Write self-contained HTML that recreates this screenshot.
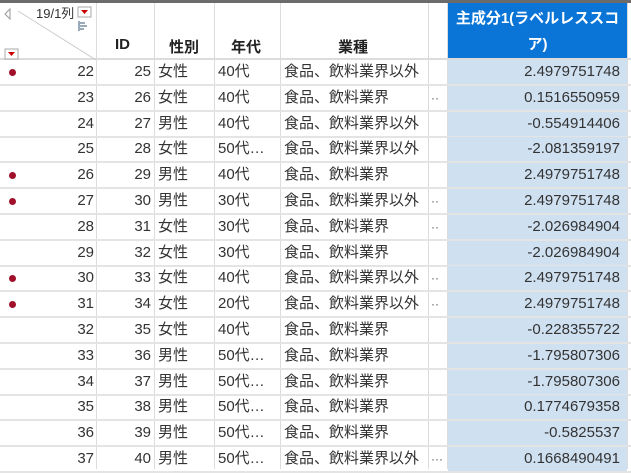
<!DOCTYPE html>
<html><head><meta charset="utf-8"><style>
*{margin:0;padding:0;box-sizing:border-box}
body{width:631px;height:469px;overflow:hidden;background:#fff;font-family:"Liberation Sans","Noto Sans CJK JP",sans-serif;font-size:15px;color:#333;position:relative}
.top{position:absolute;left:0;top:0;width:631px;height:3px;background:#6b6b6b}
.vl{position:absolute;top:3px;bottom:0;width:1px;background:#dcdcdc}
.hdr{position:absolute;top:3px;height:57px;font-weight:bold;color:#222;font-size:15px}
.r{position:absolute;left:0;width:631px;height:26px;border-bottom:2px solid #e4e4e4}
.c{position:absolute;top:0;height:24px;line-height:24px;white-space:nowrap;overflow:hidden}
.n{left:0;width:94px;text-align:right}
.id{left:97px;width:54px;text-align:right}
.g{left:158px}
.a{left:218px}
.b{left:284px}
.d{left:431px;color:#555;font-size:12px}
.v{left:448px;width:179px;background:#cfe0f1;text-align:right;padding-right:7px;height:24px}
.dot{position:absolute;left:9px;top:9px;width:7px;height:7px;border-radius:50%;background:#a0102a}
</style></head><body>
<div class="top"></div>
<div style="position:absolute;left:448px;top:3px;width:179px;height:57px;background:#0a75d6;color:#fff;font-weight:bold;font-size:15px;text-align:center;line-height:26px;padding-top:3px;white-space:nowrap">主成分1(ラベルレススコ<br>ア)</div>
<div class="vl" style="left:96px"></div>
<div class="vl" style="left:154px"></div>
<div class="vl" style="left:214px"></div>
<div class="vl" style="left:280px"></div>
<div class="vl" style="left:428px"></div>
<div class="vl" style="left:447px"></div>
<div class="vl" style="left:627px"></div>
<div style="position:absolute;left:0;top:58px;width:631px;height:2px;background:#dcdcdc"></div>
<svg style="position:absolute;left:0;top:3px" width="96" height="57">
<line x1="18" y1="8" x2="96" y2="57" stroke="#ccc" stroke-width="1"/>
<polygon points="10,6 5,11 10,16" fill="none" stroke="#999"/>
<rect x="78" y="4" width="13" height="10" fill="#fff" stroke="#aaa"/><polygon points="81,7 88,7 84.5,11" fill="#c00"/>
<rect x="5" y="46" width="13" height="10" fill="#fff" stroke="#aaa"/><polygon points="8,49 15,49 11.5,53" fill="#c00"/>
<rect x="78" y="18" width="2" height="10" fill="#9ab"/><rect x="80" y="19" width="5" height="2" fill="#9ab"/><rect x="80" y="22" width="7" height="2" fill="#9ab"/><rect x="80" y="25" width="4" height="2" fill="#9ab"/>
</svg>
<div style="position:absolute;left:36px;top:3px;font-size:13px;color:#333">19/1列</div>
<div class="hdr" style="left:115px;top:36px">ID</div>
<div class="hdr" style="left:169px;top:36px">性別</div>
<div class="hdr" style="left:231px;top:36px">年代</div>
<div class="hdr" style="left:338px;top:36px">業種</div>

<div class="r" style="top:60px"><div class="dot"></div><div class="c n">22</div><div class="c id">25</div><div class="c g">女性</div><div class="c a">40代</div><div class="c b">食品、飲料業界以外</div><div class="c v">2.4979751748</div></div>
<div class="r" style="top:85.8px"><div class="c n">23</div><div class="c id">26</div><div class="c g">女性</div><div class="c a">40代</div><div class="c b">食品、飲料業界</div><div class="c d">··</div><div class="c v">0.1516550959</div></div>
<div class="r" style="top:111.6px"><div class="c n">24</div><div class="c id">27</div><div class="c g">男性</div><div class="c a">40代</div><div class="c b">食品、飲料業界以外</div><div class="c v">-0.554914406</div></div>
<div class="r" style="top:137.4px"><div class="c n">25</div><div class="c id">28</div><div class="c g">女性</div><div class="c a">50代…</div><div class="c b">食品、飲料業界以外</div><div class="c v">-2.081359197</div></div>
<div class="r" style="top:163.2px"><div class="dot"></div><div class="c n">26</div><div class="c id">29</div><div class="c g">男性</div><div class="c a">40代</div><div class="c b">食品、飲料業界</div><div class="c v">2.4979751748</div></div>
<div class="r" style="top:189px"><div class="dot"></div><div class="c n">27</div><div class="c id">30</div><div class="c g">男性</div><div class="c a">30代</div><div class="c b">食品、飲料業界以外</div><div class="c d">··</div><div class="c v">2.4979751748</div></div>
<div class="r" style="top:214.8px"><div class="c n">28</div><div class="c id">31</div><div class="c g">女性</div><div class="c a">30代</div><div class="c b">食品、飲料業界</div><div class="c d">··</div><div class="c v">-2.026984904</div></div>
<div class="r" style="top:240.6px"><div class="c n">29</div><div class="c id">32</div><div class="c g">女性</div><div class="c a">30代</div><div class="c b">食品、飲料業界</div><div class="c v">-2.026984904</div></div>
<div class="r" style="top:266.4px"><div class="dot"></div><div class="c n">30</div><div class="c id">33</div><div class="c g">女性</div><div class="c a">40代</div><div class="c b">食品、飲料業界以外</div><div class="c d">··</div><div class="c v">2.4979751748</div></div>
<div class="r" style="top:292.2px"><div class="dot"></div><div class="c n">31</div><div class="c id">34</div><div class="c g">女性</div><div class="c a">20代</div><div class="c b">食品、飲料業界以外</div><div class="c d">··</div><div class="c v">2.4979751748</div></div>
<div class="r" style="top:318px"><div class="c n">32</div><div class="c id">35</div><div class="c g">女性</div><div class="c a">40代</div><div class="c b">食品、飲料業界</div><div class="c v">-0.228355722</div></div>
<div class="r" style="top:343.8px"><div class="c n">33</div><div class="c id">36</div><div class="c g">男性</div><div class="c a">50代…</div><div class="c b">食品、飲料業界</div><div class="c v">-1.795807306</div></div>
<div class="r" style="top:369.6px"><div class="c n">34</div><div class="c id">37</div><div class="c g">男性</div><div class="c a">50代…</div><div class="c b">食品、飲料業界</div><div class="c v">-1.795807306</div></div>
<div class="r" style="top:395.4px"><div class="c n">35</div><div class="c id">38</div><div class="c g">男性</div><div class="c a">50代…</div><div class="c b">食品、飲料業界</div><div class="c v">0.1774679358</div></div>
<div class="r" style="top:421.2px"><div class="c n">36</div><div class="c id">39</div><div class="c g">男性</div><div class="c a">50代…</div><div class="c b">食品、飲料業界</div><div class="c v">-0.5825537</div></div>
<div class="r" style="top:447px"><div class="c n">37</div><div class="c id">40</div><div class="c g">男性</div><div class="c a">50代…</div><div class="c b">食品、飲料業界以外</div><div class="c d">···</div><div class="c v">0.1668490491</div></div>
</body></html>
